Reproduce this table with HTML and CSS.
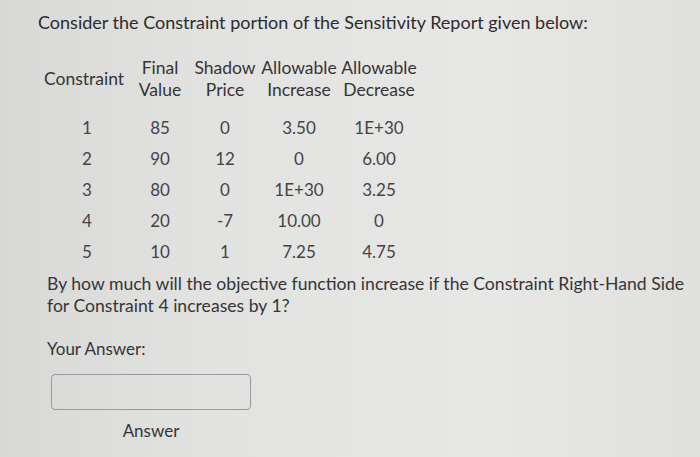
FILE: index.html
```html
<!DOCTYPE html>
<html>
<head>
<meta charset="utf-8">
<link rel="stylesheet" href="styles.css">
</head>
<body>
<div class="page">
  <h1 class="title">Consider the Constraint portion of the Sensitivity Report given below:</h1>
  <table class="report">
    <colgroup>
      <col class="c1"><col class="c2"><col class="c3"><col class="c4"><col class="c5">
    </colgroup>
    <thead>
      <tr>
        <th rowspan="2" class="hcon">Constraint</th>
        <th>Final</th><th>Shadow</th><th>Allowable</th><th>Allowable</th>
      </tr>
      <tr>
        <th>Value</th><th>Price</th><th>Increase</th><th>Decrease</th>
      </tr>
    </thead>
    <tbody>
      <tr class="first"><td>1</td><td>85</td><td>0</td><td>3.50</td><td>1E+30</td></tr>
      <tr><td>2</td><td>90</td><td>12</td><td>0</td><td>6.00</td></tr>
      <tr><td>3</td><td>80</td><td>0</td><td>1E+30</td><td>3.25</td></tr>
      <tr><td>4</td><td>20</td><td>-7</td><td>10.00</td><td>0</td></tr>
      <tr><td>5</td><td>10</td><td>1</td><td>7.25</td><td>4.75</td></tr>
    </tbody>
  </table>
  <p class="question">By how much will the objective function increase if the Constraint Right-Hand Side for Constraint 4 increases by 1?</p>
  <p class="your">Your Answer:</p>
  <div class="answer">
    <input class="box" type="text" aria-label="Answer">
    <div class="label">Answer</div>
  </div>
</div>
</body>
</html>
```

FILE: styles.css
```css
html, body {
  margin: 0;
  padding: 0;
}
body {
  width: 700px;
  height: 457px;
  overflow: hidden;
  font-family: Lato, "Open Sans", sans-serif;
  color: #353537;
  background: linear-gradient(90deg, #d8d8d6 0%, #e2e2e0 30%, #e7e7e5 70%, #e0e0df 100%);
}
.page {
  padding: 10px 0 0 38px;
}
.title {
  margin: 0;
  font-size: 18px;
  font-weight: normal;
  line-height: 24px;
  color: #2c2c2e;
}
.report {
  margin: 23px 0 0 6px;
  border-collapse: collapse;
  table-layout: fixed;
  width: 376px;
  font-size: 17px;
}
.c1 { width: 86px; }
.c2 { width: 60px; }
.c3 { width: 70px; }
.c4 { width: 78px; }
.c5 { width: 82px; }
.report th {
  font-weight: normal;
  font-size: 17.5px;
  text-align: center;
  white-space: nowrap;
  padding: 0;
  height: 22px;
  line-height: 22px;
}
.report th.hcon {
  text-align: left;
  vertical-align: middle;
}
.report td {
  text-align: center;
  padding: 0;
  height: 31px;
  line-height: 31px;
  color: #444446;
}
.report tr.first td {
  padding-top: 11px;
}
.question {
  margin: 6px 0 0 9px;
  width: 645px;
  font-size: 17.6px;
  line-height: 22px;
}
.your {
  margin: 21px 0 0 9px;
  font-size: 17px;
  line-height: 22px;
}
.answer {
  margin: 14px 0 0 13px;
  width: 200px;
  display: flex;
  flex-direction: column;
  align-items: center;
}
.box {
  box-sizing: border-box;
  width: 200px;
  height: 36px;
  border: 1.5px solid #9a9a9a;
  border-radius: 4px;
  background: transparent;
  margin: 0;
}
.label {
  margin-top: 10px;
  font-size: 17px;
  line-height: 22px;
}
```
